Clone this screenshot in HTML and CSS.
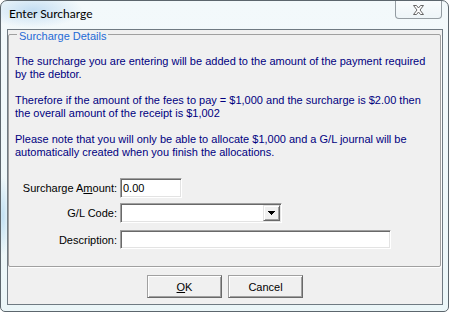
FILE: index.html
```html
<!DOCTYPE html>
<html>
<head>
<meta charset="utf-8">
<title>Enter Surcharge</title>
<link rel="stylesheet" href="styles.css">
</head>
<body>
<div class="window">
  <div class="titlebar">
    <span class="title">Enter Surcharge</span>
    <div class="close">
      <svg width="13" height="10" viewBox="0 0 13 10"><path d="M1.5 0.5h3l2 2.5 2-2.5h3l-3.5 4.5 3.5 4.5h-3l-2-2.5-2 2.5h-3l3.5-4.5z" fill="#fff" stroke="#666" stroke-width="1" stroke-linejoin="round"/></svg>
    </div>
  </div>
  <div class="client">
    <div class="groupbox">
      <div class="legend">Surcharge Details</div>
      <p class="msg">The surcharge you are entering will be added to the amount of the payment required<br>by the debtor.</p>
      <p class="msg">Therefore if the amount of the fees to pay = $1,000 and the surcharge is $2.00 then<br>the overall amount of the receipt is $1,002</p>
      <p class="msg">Please note that you will only be able to allocate $1,000 and a G/L journal will be<br>automatically created when you finish the allocations.</p>
      <div class="form">
        <label class="lbl">Surcharge A<u>m</u>ount:</label>
        <div class="field amount">0.00</div>
        <label class="lbl">G/L Code:</label>
        <div class="field combo">
          <span class="drop"><svg width="7" height="4" viewBox="0 0 7 4"><path d="M0 0h7v1h-1v1h-1v1h-1v1h-1v-1h-1v-1h-1v-1h-1z" fill="#000"/></svg></span>
        </div>
        <label class="lbl r3">Description:</label>
        <div class="field desc r3"></div>
      </div>
    </div>
    <div class="buttons">
      <button class="btn"><u>O</u>K</button>
      <button class="btn">Cancel</button>
    </div>
  </div>
</div>
</body>
</html>
```
FILE: styles.css
```css
* { box-sizing: border-box; }
html, body { margin: 0; padding: 0; }
body {
  width: 449px;
  height: 312px;
  overflow: hidden;
  background: #fff;
  font-family: "Liberation Sans", Arial, sans-serif;
  font-size: 11px;
}
.window {
  width: 449px;
  height: 312px;
  border: 1px solid #5c666d;
  border-radius: 7px 7px 5px 5px;
  background:
    radial-gradient(ellipse 50px 18px at 32px 9px, rgba(150, 195, 235, 0.5), rgba(150, 195, 235, 0)),
    radial-gradient(ellipse 6px 40px at 2px 215px, rgba(150, 200, 235, 0.5), rgba(150, 200, 235, 0)),
    linear-gradient(#f3f9fb, #ebf6f8);
  display: flex;
  flex-direction: column;
  overflow: hidden;
}
.titlebar {
  height: 28px;
  flex: none;
  display: flex;
  justify-content: space-between;
  align-items: flex-start;
  padding-left: 8px;
}
.title {
  font-family: Lato, "Noto Sans", sans-serif;
  font-size: 12px;
  line-height: 16px;
  padding-top: 5px;
  color: #000;
}
.close {
  width: 47px;
  height: 18px;
  margin-right: 6px;
  border: 1px solid rgba(70, 80, 90, 0.55);
  border-top: 0;
  border-radius: 0 0 4px 4px;
  background: linear-gradient(#f9fcfd, #eef5f8);
  display: flex;
  align-items: center;
  justify-content: center;
}
.close svg { display: block; }
.client {
  margin: 0 5px 6px 6px;
  height: 276px;
  flex: none;
  border: 1px solid #6f7a82;
  background: #f0f0f0;
  display: flex;
  flex-direction: column;
}
.groupbox {
  margin: 4px 1px 0 0;
  height: 233px;
  flex: none;
  border: 1px solid #a0a0a0;
  border-radius: 2px;
  box-shadow: 1px 1px 0 #fff;
}
.legend {
  width: max-content;
  margin: -4px 0 0 8px;
  padding: 0 2px;
  line-height: 11px;
  background: #f0f0f0;
  color: #1f6ad6;
}
.msg {
  margin: 13px 0 0 6px;
  line-height: 13px;
  color: #000080;
  white-space: nowrap;
}
.form {
  display: grid;
  grid-template-columns: 108px auto;
  column-gap: 3px;
  row-gap: 5px;
  margin-top: 19px;
  justify-items: start;
  align-items: start;
}
.lbl {
  justify-self: end;
  line-height: 20px;
  color: #000;
}
.field {
  height: 20px;
  background: #fff;
  border: 1px solid;
  border-color: #a0a0a0 #fff #fff #a0a0a0;
  box-shadow: inset 1px 1px 0 #696969, inset -1px -1px 0 #e3e3e3;
  padding: 1px 2px;
  line-height: 16px;
  color: #000;
}
.amount { width: 62px; }
.combo {
  width: 162px;
  display: flex;
  justify-content: flex-end;
  padding: 1px;
}
.drop {
  width: 17px;
  height: 16px;
  background: #f0f0f0;
  border: 1px solid;
  border-color: #e3e3e3 #696969 #696969 #e3e3e3;
  box-shadow: inset 1px 1px 0 #fff, inset -1px -1px 0 #a0a0a0;
  display: flex;
  align-items: center;
  justify-content: center;
}
.drop svg { display: block; }
.r3 { margin-top: 2px; }
.desc { width: 271px; height: 19px; }
.buttons {
  display: flex;
  justify-content: center;
  gap: 6px;
  margin-top: 8px;
}
.btn {
  width: 75px;
  height: 23px;
  padding: 0;
  font-family: "Liberation Sans", Arial, sans-serif;
  font-size: 11px;
  color: #000;
  background: #f0f0f0;
  border: 1px solid;
  border-color: #a0a0a0 #696969 #696969 #a0a0a0;
  box-shadow: inset 1px 1px 0 #fff, inset -1px -1px 0 #a0a0a0;
}
```
